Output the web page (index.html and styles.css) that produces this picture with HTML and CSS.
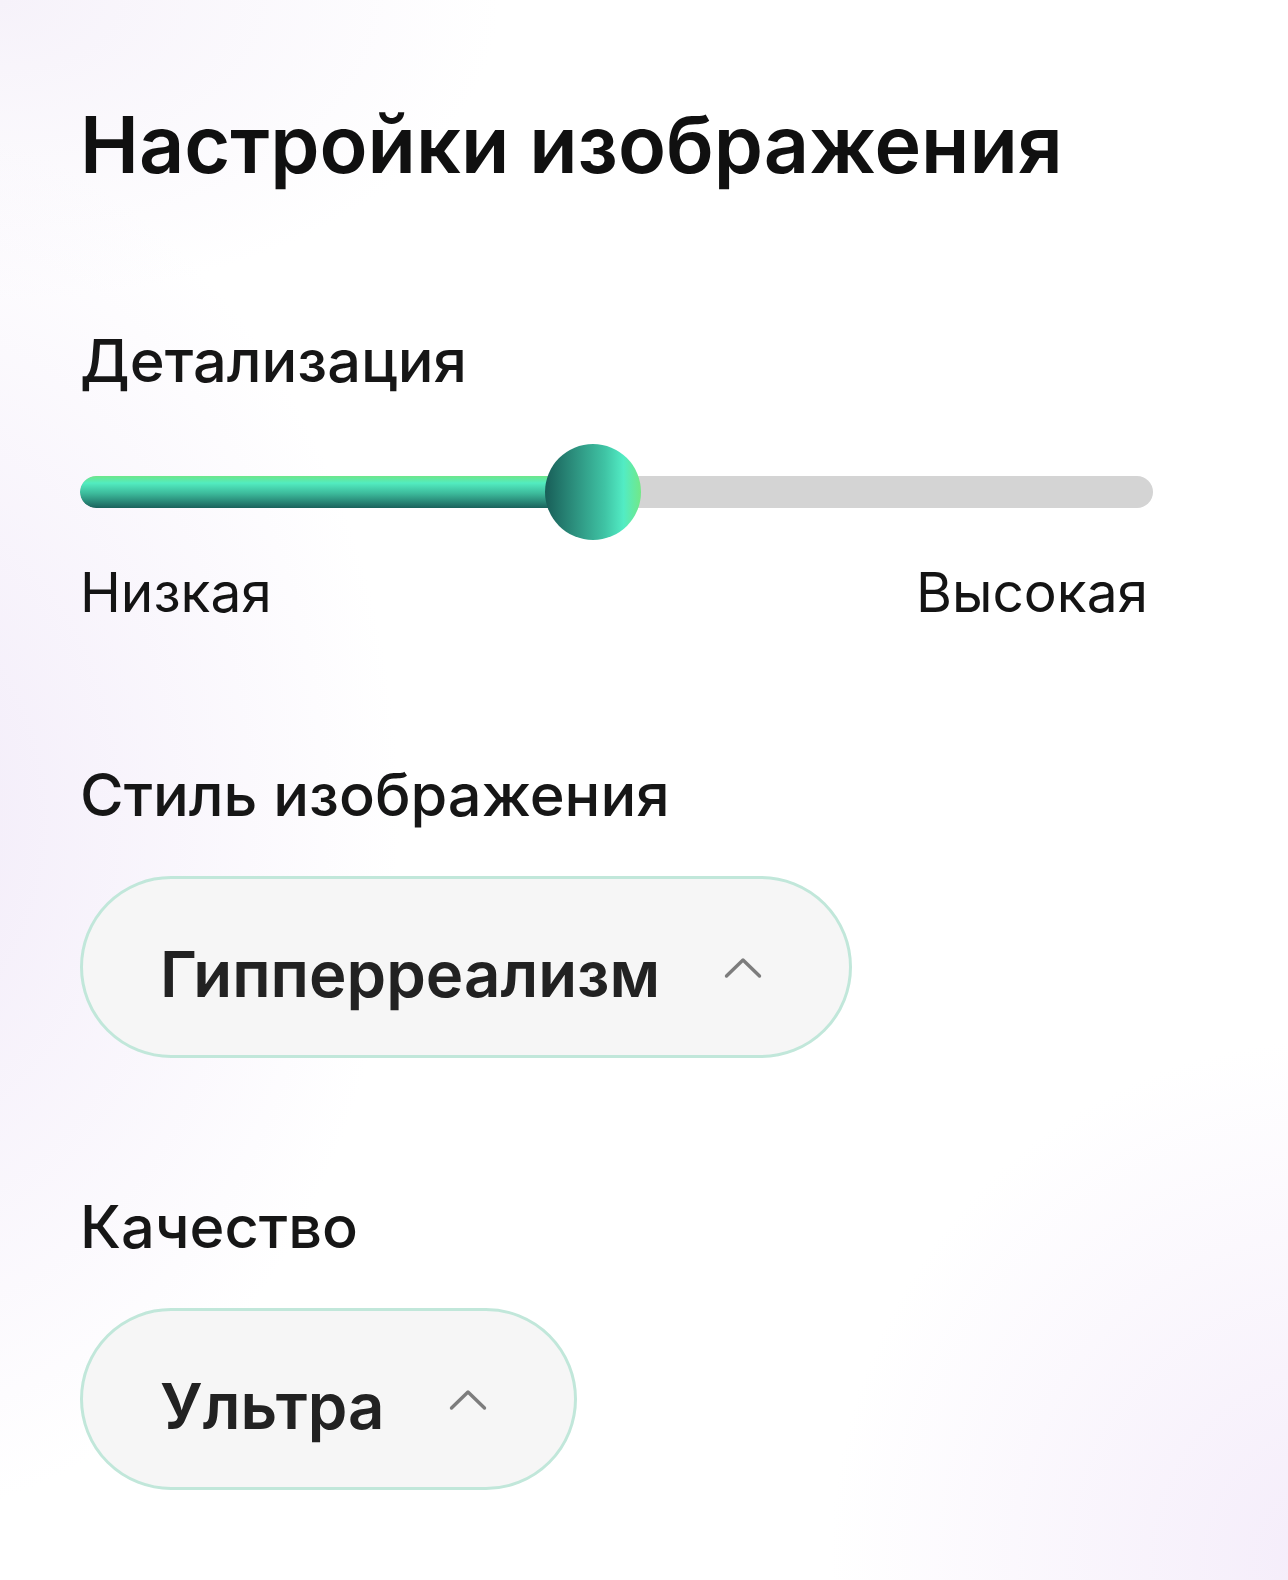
FILE: index.html
```html
<!DOCTYPE html>
<html lang="ru">
<head>
<meta charset="utf-8">
<title>Настройки изображения</title>
<link rel="stylesheet" href="styles.css">
</head>
<body>
<main class="panel">
  <h1 class="title">Настройки изображения</h1>

  <section class="group group-detail">
    <h2 class="label">Детализация</h2>
    <div class="slider">
      <div class="track">
        <div class="fill" style="width: 47.8%"></div>
      </div>
      <div class="knob" style="left: calc(47.8% - 48px)"></div>
    </div>
    <div class="scale">
      <span>Низкая</span>
      <span>Высокая</span>
    </div>
  </section>

  <section class="group group-style">
    <h2 class="label">Стиль изображения</h2>
    <button class="select select-style" type="button">
      <span class="select-text">Гипперреализм</span>
      <svg class="chevron" width="38" height="24" viewBox="0 0 38 24" aria-hidden="true"><path d="M2.5 21 L19 5 L35.5 21" fill="none" stroke="#7d7d7d" stroke-width="3.4" stroke-linecap="round" stroke-linejoin="round"/></svg>
    </button>
  </section>

  <section class="group group-quality">
    <h2 class="label">Качество</h2>
    <button class="select select-quality" type="button">
      <span class="select-text">Ультра</span>
      <svg class="chevron" width="38" height="24" viewBox="0 0 38 24" aria-hidden="true"><path d="M2.5 21 L19 5 L35.5 21" fill="none" stroke="#7d7d7d" stroke-width="3.4" stroke-linecap="round" stroke-linejoin="round"/></svg>
    </button>
  </section>
</main>
</body>
</html>
```
FILE: styles.css
```css
* { box-sizing: border-box; }

html, body {
  margin: 0;
  padding: 0;
}

body {
  width: 1288px;
  min-height: 1580px;
  font-family: Inter, "Noto Sans", sans-serif;
  color: #141414;
  background:
    radial-gradient(ellipse 520px 700px at -120px 820px, rgba(240, 232, 248, 0.9), rgba(255,255,255,0) 100%),
    radial-gradient(ellipse 500px 520px at 1330px 1560px, rgba(244, 236, 250, 1), rgba(255,255,255,0) 100%),
    radial-gradient(ellipse 500px 300px at 0px 0px, rgba(246, 242, 250, 1), rgba(255,255,255,0) 100%),
    #ffffff;
}

.panel {
  padding: 104px 135px 100px 80px;
  display: flex;
  flex-direction: column;
}

.title {
  margin: 0;
  font-size: 79px;
  line-height: 80px;
  font-weight: 600;
  color: #101010;
  letter-spacing: 0;
}

.group {
  display: flex;
  flex-direction: column;
}

.group-detail { margin-top: 146px; }
.group-style { margin-top: 144px; }
.group-quality { margin-top: 138px; }

.label {
  margin: 0;
  font-size: 59.5px;
  line-height: 60px;
  font-weight: 500;
  color: #161616;
}

.slider {
  position: relative;
  margin-top: 54px;
  height: 96px;
  display: flex;
  align-items: center;
}

.track {
  width: 100%;
  height: 32px;
  border-radius: 16px;
  background: #d4d4d4;
  overflow: hidden;
}

.fill {
  height: 100%;
  border-radius: 16px 0 0 16px;
  background: linear-gradient(180deg, #6ee68a 0%, #52ecc0 22%, #3cb99a 55%, #1a625c 100%);
}

.knob {
  position: absolute;
  top: 0;
  width: 96px;
  height: 96px;
  border-radius: 50%;
  background: linear-gradient(90deg, #185e58 0%, #2c8f7d 30%, #3fc3a4 62%, #52ecc4 82%, #72e888 100%);
}

.scale {
  margin-top: 24px;
  display: flex;
  justify-content: space-between;
  font-size: 55px;
  line-height: 56px;
  font-weight: 400;
  color: #141414;
  padding-right: 5px;
}

.select {
  margin-top: 52px;
  align-self: flex-start;
  display: flex;
  align-items: center;
  height: 182px;
  padding: 0 87px 0 77px;
  border: 3px solid #c1e7da;
  border-radius: 91px;
  background: #f6f6f6;
  font-family: inherit;
  cursor: pointer;
}

.select-text {
  font-size: 63.5px;
  line-height: 64px;
  font-weight: 600;
  color: #222222;
  padding-top: 14px;
}

.chevron {
  margin-left: 64px;
  display: block;
  flex: none;
}
```
